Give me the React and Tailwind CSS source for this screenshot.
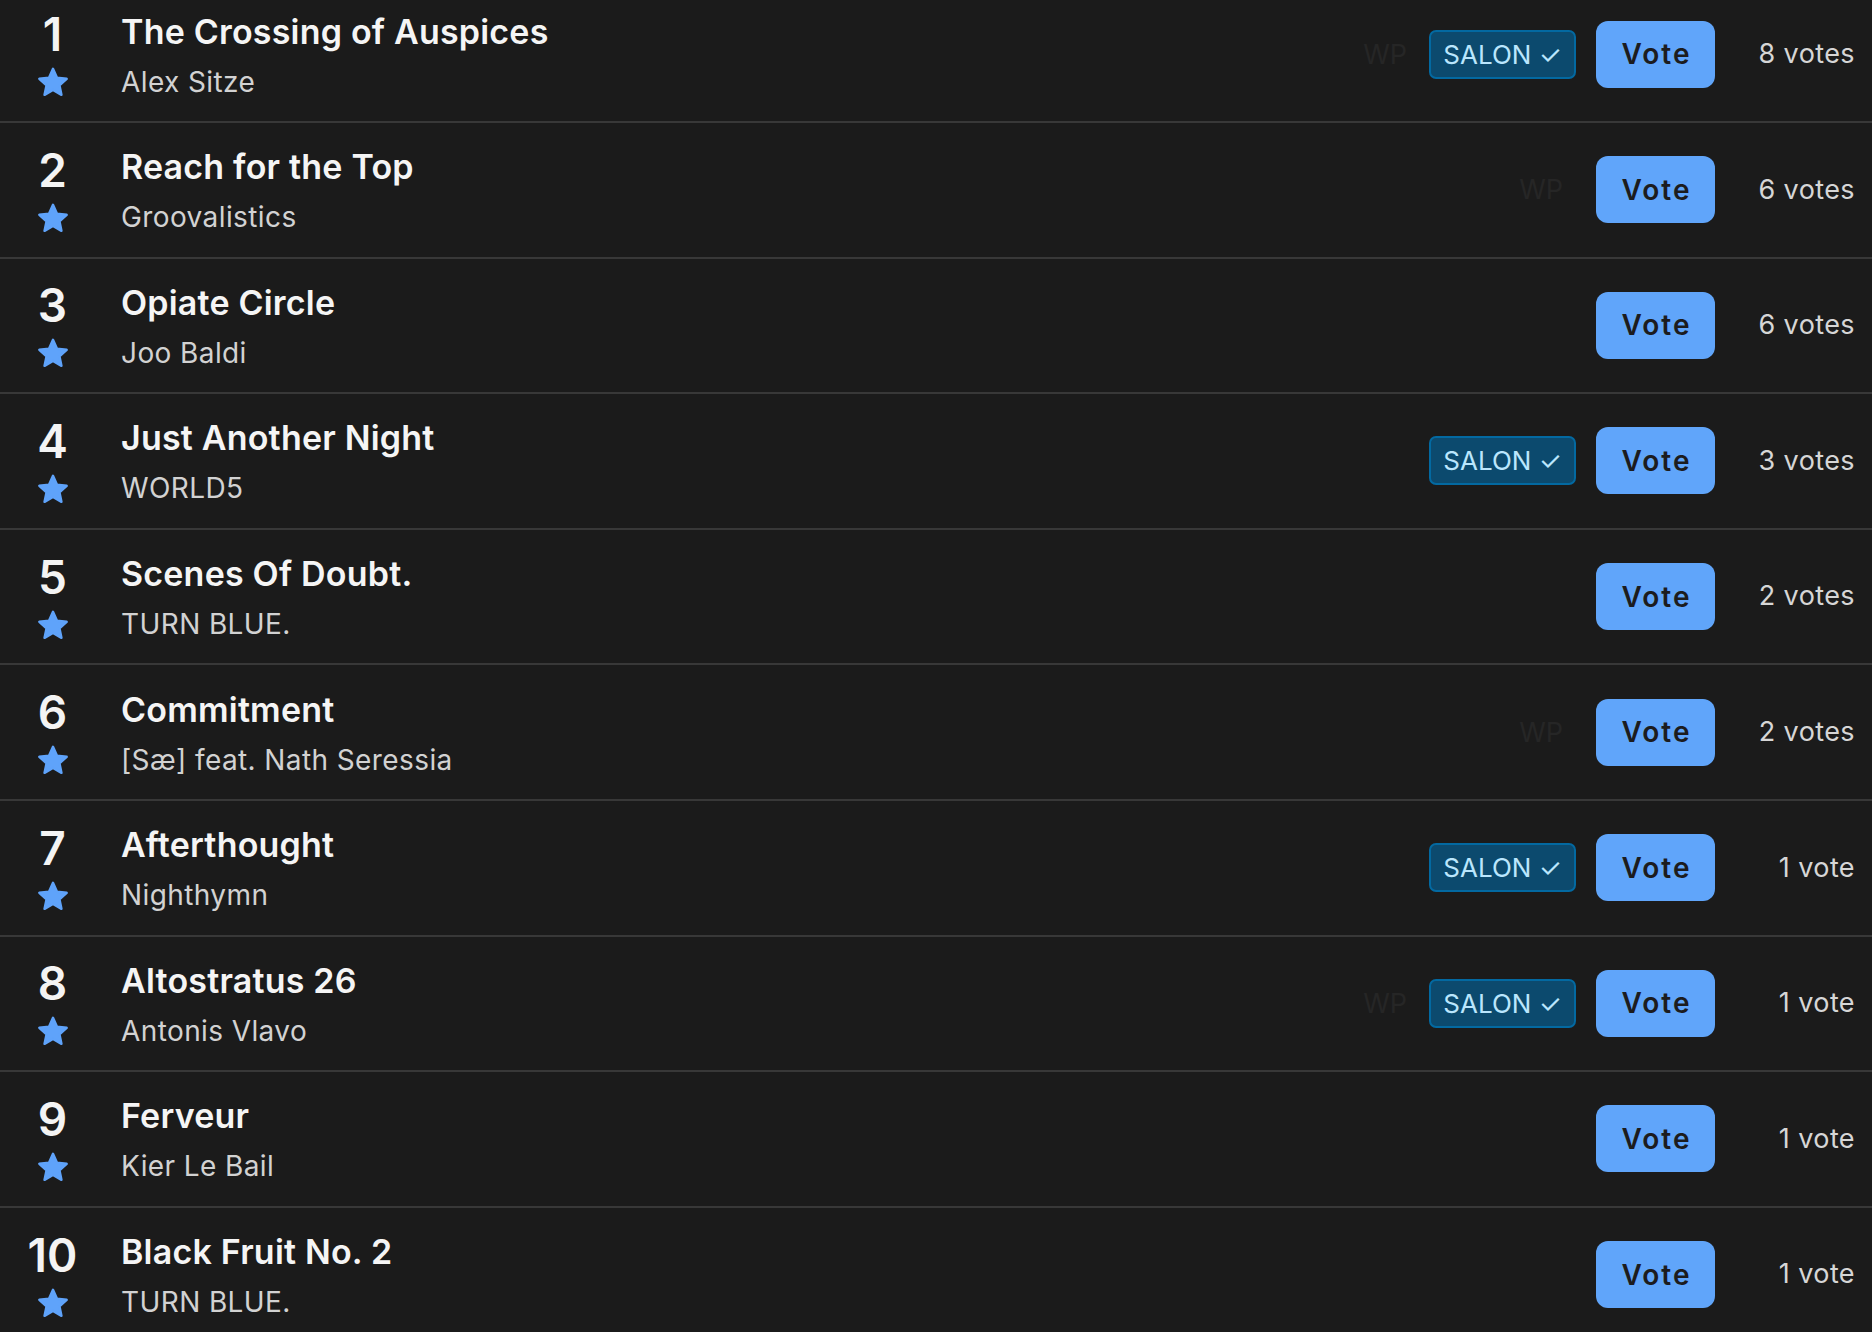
const ENTRIES = [
  { title: 'The Crossing of Auspices', artist: 'Alex Sitze', votes: 8, salon: true, wp: true },
  { title: 'Reach for the Top', artist: 'Groovalistics', votes: 6, salon: false, wp: true },
  { title: 'Opiate Circle', artist: 'Joo Baldi', votes: 6, salon: false, wp: false },
  { title: 'Just Another Night', artist: 'WORLD5', votes: 3, salon: true, wp: false },
  { title: 'Scenes Of Doubt.', artist: 'TURN BLUE.', votes: 2, salon: false, wp: false },
  { title: 'Commitment', artist: '[Sæ] feat. Nath Seressia', votes: 2, salon: false, wp: true },
  { title: 'Afterthought', artist: 'Nighthymn', votes: 1, salon: true, wp: false },
  { title: 'Altostratus 26', artist: 'Antonis Vlavo', votes: 1, salon: true, wp: true },
  { title: 'Ferveur', artist: 'Kier Le Bail', votes: 1, salon: false, wp: false },
  { title: 'Black Fruit No. 2', artist: 'TURN BLUE.', votes: 1, salon: false, wp: false },
];

// five-point star, inner radius a bit fat like the iOS symbol
const STAR_POINTS = Array.from({ length: 10 }, (_, i) => {
  const r = i % 2 === 0 ? 14.4 : 6.8;
  const a = -Math.PI / 2 + (i * Math.PI) / 5;
  return `${(16 + r * Math.cos(a)).toFixed(2)},${(16.2 + r * Math.sin(a)).toFixed(2)}`;
}).join(' ');

function Star() {
  return (
    <svg width="32" height="30" viewBox="0 0 32 30" className="block">
      <polygon
        points={STAR_POINTS}
        fill="#5fa3fa"
        stroke="#5fa3fa"
        strokeWidth="2.4"
        strokeLinejoin="round"
      />
    </svg>
  );
}

function Row({ rank, entry }) {
  return (
    <div className="flex items-center h-[135.6px] border-b-2 border-[#383838]">
      {/* rank + star */}
      <div className="w-[105px] shrink-0 flex flex-col items-center">
        <span className="text-[46px] leading-[46px] font-semibold text-[#f4f4f4]">{rank}</span>
        <div className="mt-[10px]">
          <Star />
        </div>
      </div>

      {/* title + artist */}
      <div className="ml-[16px] flex-1 flex flex-col">
        <span className="mt-[2px] text-[34px] leading-[40px] font-semibold tracking-[0.2px] text-[#f5f5f5]">
          {entry.title}
        </span>
        <span className="mt-[13px] text-[28px] leading-[34px] tracking-[0.4px] text-[#d2d2d2]">
          {entry.artist}
        </span>
      </div>

      {/* right side */}
      <div className="flex items-center pr-[17px]">
        {entry.wp && (
          <span
            className={`text-[27px] leading-none text-[#262626] ${entry.salon ? 'mr-[22px]' : 'mr-[33px]'}`}
          >
            WP
          </span>
        )}
        {entry.salon && (
          <span className="mr-[20px] h-[49px] w-[147px] flex items-center justify-center rounded-[7px] border-2 border-[#0369a1] bg-[#0c4a6e] text-[26px] text-[#bae6fd]">
            SALON ✓
          </span>
        )}
        <button className="h-[67px] w-[119px] rounded-[12px] bg-[#60a5fa] pl-[2px] text-[28px] font-semibold tracking-[2px] text-[#1c1c1e]">
          Vote
        </button>
        <span className="w-[140px] text-right text-[27px] tracking-[0.4px] text-[#d6d6d6]">
          {entry.votes} {entry.votes === 1 ? 'vote' : 'votes'}
        </span>
      </div>
    </div>
  );
}

export default function App() {
  return (
    <div
      className="min-h-screen bg-[#1b1b1b] overflow-hidden"
      style={{ fontFamily: 'Inter, "Noto Sans", sans-serif' }}
    >
      <div className="-mt-[12.6px]">
        {ENTRIES.map((e, i) => (
          <Row key={i} rank={i + 1} entry={e} />
        ))}
      </div>
    </div>
  );
}
